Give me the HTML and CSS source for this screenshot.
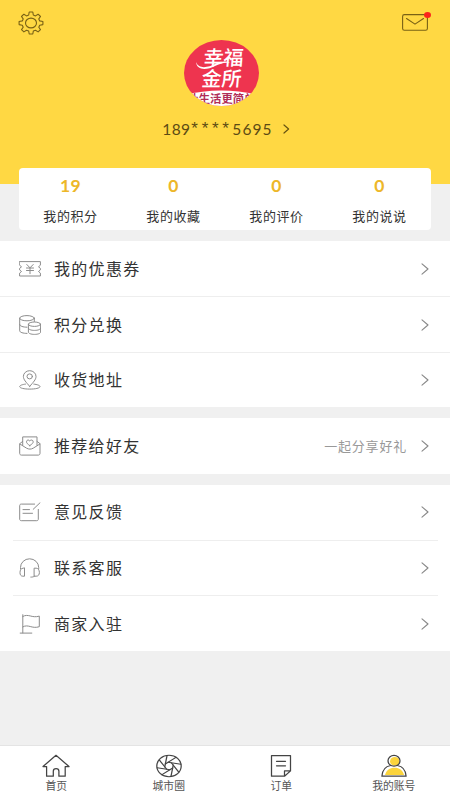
FILE: index.html
```html
<!DOCTYPE html>
<html lang="zh-CN">
<head>
<meta charset="utf-8">
<title>我的账号</title>
<link rel="stylesheet" href="styles.css">
</head>
<body>
<div class="app">
  <header class="hero">
    <div class="toolbar">
      <svg class="gear" width="26" height="24" viewBox="0 0 26 24"><path d="M11.2 1h3.6l.5 3 2.2.9 2.6-1.7 2.4 2.3-1.7 2.4.9 2 3.2.6v3.1l-3.2.6-.9 2 1.7 2.4-2.4 2.3-2.6-1.7-2.2.9-.5 2.900h-3.600l-.5-2.900-2.200-.9-2.600 1.700-2.400-2.300 1.700-2.400-.9-2-3.200-.6v-3.100l3.200-.6.9-2-1.700-2.400 2.400-2.300 2.600 1.700 2.200-.9z"/><ellipse cx="13" cy="12" rx="5.500" ry="4.900"/></svg>
      <span class="mail">
        <svg width="26" height="17" viewBox="0 0 26 17"><rect x=".6" y=".6" width="24.800" height="15.600" rx="1.800"/><path d="M4.500 4.500l8.500 5.600 8.500-5.600"/></svg>
        <i class="dot"></i>
      </span>
    </div>
    <div class="avatar">
      <div class="brand"><span>幸福</span><span>金所</span></div>
      <svg class="swoosh" width="75" height="66" viewBox="0 0 75 66"><path d="M12 22c3 8 13 5 19 2 6-3 11-3 15-1-6-1-10 1-15 3-8 4-18 5-19-4z" fill="#fff"/><path d="M0 55Q37 46 75 55V66H0z" fill="#fff"/></svg>
      <div class="slogan">让生活更简单</div>
    </div>
    <div class="phone"><span class="head">189</span><span class="mask">****</span><span class="tail">5695</span><svg width="7" height="10" viewBox="0 0 7 10"><path d="M1 1l4.600 4-4.600 4"/></svg></div>
  </header>

  <section class="stats">
    <div class="stat"><b>19</b><span>我的积分</span></div>
    <div class="stat"><b>0</b><span>我的收藏</span></div>
    <div class="stat"><b>0</b><span>我的评价</span></div>
    <div class="stat"><b>0</b><span>我的说说</span></div>
  </section>

  <section class="group">
    <div class="row">
      <svg class="icon" viewBox="0 0 22 20"><path d="M.6 2.600h20.800v3.600l-1.900 1.600 1.900 1.600v1.500l-1.900 1.600 1.900 1.600v2.900H.6v-2.900l1.900-1.600-1.900-1.600V9.400l1.900-1.600L.6 6.200z"/><path d="M7.800 5.500l3.200 3.300 3.200-3.300M11 8.800v5.900M7.500 9h7M7.500 11.500h7"/></svg>
      <span class="label">我的优惠券</span><svg class="arrow" viewBox="0 0 8 12"><path d="M1 .8L7 6 1 11.200"/></svg>
    </div>
    <div class="row">
      <svg class="icon" viewBox="0 0 22 20"><ellipse cx="8" cy="3.200" rx="7.300" ry="2.600"/><path d="M.7 3.200v12.600c0 1.500 3.300 2.600 7.300 2.600M.7 9.600c0 1.500 3.300 2.600 7.300 2.600M15.300 3.200v3.300"/><ellipse cx="15.500" cy="9.200" rx="6.100" ry="2.200"/><path d="M9.400 9.200v7.900c0 1.300 2.700 2.300 6.100 2.300s6.100-1 6.100-2.300V9.200M9.400 13.200c0 1.300 2.700 2.200 6.100 2.200s6.100-.9 6.100-2.200"/></svg>
      <span class="label">积分兑换</span><svg class="arrow" viewBox="0 0 8 12"><path d="M1 .8L7 6 1 11.200"/></svg>
    </div>
    <div class="row">
      <svg class="icon" viewBox="0 0 22 20"><path d="M10.700 16.400C7 12 4.400 9.700 4.400 6.400a6.300 5.700 0 0 1 12.600 0c0 3.300-2.600 5.600-6.300 10z"/><ellipse cx="10.700" cy="6.400" rx="2.700" ry="2.500"/><path d="M6.500 14.100C3.200 14.500.7 15.400.7 16.600c0 1.500 4.500 2.500 10 2.500s10.300-1 10.300-2.500c0-1.200-2.700-2.100-6.200-2.500"/></svg>
      <span class="label">收货地址</span><svg class="arrow" viewBox="0 0 8 12"><path d="M1 .8L7 6 1 11.200"/></svg>
    </div>
  </section>

  <section class="group">
    <div class="row">
      <svg class="icon" viewBox="0 0 22 20"><path d="M3.700 9.300V.9h14.300v8.400M3.700 5.400L.7 7.700v9.700c0 1 .7 1.700 1.700 1.700h16.900c1 0 1.700-.7 1.700-1.700V7.700l-3-2.300M.9 8l6.700 4.200c2.300 1.200 4.400 1.200 6.600 0L20.900 8"/><path d="M10.800 9.600C8.400 8 7.500 7 7.500 5.800c0-2 2.400-2.400 3.300-.8.900-1.600 3.400-1.200 3.400.8 0 1.200-1 2.200-3.400 3.800z"/></svg>
      <span class="label">推荐给好友</span><span class="note">一起分享好礼</span><svg class="arrow" viewBox="0 0 8 12"><path d="M1 .8L7 6 1 11.200"/></svg>
    </div>
  </section>

  <section class="group inset">
    <div class="row">
      <svg class="icon" viewBox="0 0 22 20"><path d="M15.600 2.100H2.300C1.200 2.100.7 2.700.7 3.500v13.700c0 .9.600 1.500 1.600 1.500h15.400c1 0 1.600-.6 1.600-1.500V7.400M21 .8l-6.800 6.500M4 7.600h6.500M4 11.300h9.500"/></svg>
      <span class="label">意见反馈</span><svg class="arrow" viewBox="0 0 8 12"><path d="M1 .8L7 6 1 11.200"/></svg>
    </div>
    <div class="row">
      <svg class="icon" viewBox="0 0 22 20"><path d="M1.500 11V9.500a9 8.600 0 0 1 18.200 0V11M5.500 10.200v8H3.800c-1.800 0-2.800-1.400-2.800-3.500 0-2.600 1-4.500 2.800-4.500zM15.500 10.200h1.700c1.900 0 3.200 1.900 3.200 4.300s-1.300 3.700-3.200 3.700h-1.700zM15.500 18.200c-1 .8-2.300.9-3.700.9"/></svg>
      <span class="label">联系客服</span><svg class="arrow" viewBox="0 0 8 12"><path d="M1 .8L7 6 1 11.200"/></svg>
    </div>
    <div class="row">
      <svg class="icon" viewBox="0 0 22 20"><path d="M3.800.7v18.200M1.200 19.100h11.600M3.800 2.500c5.500-3.400 9 2 16.500-.4v10.600c-7.500 2.500-11-3.100-16.500.2"/></svg>
      <span class="label">商家入驻</span><svg class="arrow" viewBox="0 0 8 12"><path d="M1 .8L7 6 1 11.200"/></svg>
    </div>
  </section>

  <nav class="tabs">
    <div class="tab"><svg viewBox="0 0 28 24"><path d="M1 12.500L14 1.300l13 11.200h-3.800v9.700h-6.300v-5c0-3.300-5.600-3.300-5.600 0v5H4.600v-9.700z"/></svg><span>首页</span></div>
    <div class="tab"><svg viewBox="0 0 28 24"><defs><path id="blade" d="M-1.700-4H11.300"/></defs><g transform="translate(14 12) scale(1 .88)"><circle r="12.200"/><use href="#blade" transform="rotate(10)"/><use href="#blade" transform="rotate(55)"/><use href="#blade" transform="rotate(100)"/><use href="#blade" transform="rotate(145)"/><use href="#blade" transform="rotate(190)"/><use href="#blade" transform="rotate(235)"/><use href="#blade" transform="rotate(280)"/><use href="#blade" transform="rotate(325)"/></g></svg><span>城市圈</span></div>
    <div class="tab"><svg viewBox="0 0 28 24"><path d="M4.500 1.500h19v15.400l-6 5.300h-13zM23.500 16.900h-6v5.300M9.500 7.300h9M9.500 11.800h9"/></svg><span>订单</span></div>
    <div class="tab on"><svg viewBox="0 0 28 24"><ellipse class="fill" cx="14.800" cy="7.200" rx="4.800" ry="4.300"/><path class="fill" d="M5 21c1.400-5 4.700-7.300 9.700-7.300 4.600 0 7.800 2.300 9.400 7.300z"/><ellipse cx="14" cy="6.800" rx="6" ry="5.400"/><path d="M1.900 22.200c.5-6.600 4.300-10 8.800-10.700M17.300 11.500c4.800.7 8.300 4.100 8.800 10.700H1.900"/></svg><span>我的账号</span></div>
  </nav>
</div>
</body>
</html>
```

FILE: styles.css
```css
* { box-sizing: border-box; }
body {
  margin: 0;
  background: #f0f0f0;
  color: #333;
  font-family: "Noto Sans CJK SC", sans-serif;
}
svg {
  display: block;
  flex: none;
  fill: none;
  stroke-linecap: round;
  stroke-linejoin: round;
}
.app {
  width: 450px;
  height: 800px;
  display: flex;
  flex-direction: column;
}

.hero {
  height: 184px;
  flex: none;
  background: #ffd843;
  display: flex;
  flex-direction: column;
  align-items: center;
}
.toolbar {
  width: 100%;
  height: 40px;
  padding: 11px 22px 0 18px;
  display: flex;
  justify-content: space-between;
  align-items: flex-start;
  stroke: #796115;
  stroke-width: 1.1;
}
.mail { position: relative; margin-top: 3px; }
.dot {
  position: absolute;
  top: -2px;
  right: -3px;
  width: 7px;
  height: 6px;
  border-radius: 50%;
  background: #fb241c;
}
.avatar {
  position: relative;
  width: 75px;
  height: 66px;
  margin-right: 8px;
  border-radius: 50%;
  overflow: hidden;
  background: #ee344f;
  color: #fff;
}
.brand {
  display: flex;
  flex-direction: column;
  padding: 6px 0 0 19px;
  font-size: 20px;
  font-weight: 500;
  line-height: 21px;
  transform: skewX(-5deg);
}
.swoosh { position: absolute; left: 0; top: 0; }
.slogan {
  position: absolute;
  left: 4px;
  top: 52px;
  width: 72px;
  white-space: nowrap;
  font-size: 11.3px;
  font-weight: 700;
  line-height: 13px;
  color: #b02d58;
}
.phone {
  height: 24px;
  margin-top: 11px;
  margin-left: 2px;
  display: flex;
  align-items: center;
  font-family: Lato, sans-serif;
  font-size: 15.5px;
  line-height: 24px;
  color: #5c4b14;
}
.head { width: 29px; letter-spacing: .4px; }
.mask {
  width: 41px;
  font-family: "Liberation Sans", sans-serif;
  font-size: 17px;
  letter-spacing: 3.7px;
}
.tail { letter-spacing: 1.1px; }
.phone svg { margin-left: 10px; stroke: #665312; stroke-width: 1.2; }

.stats {
  height: 62px;
  flex: none;
  margin: -16px 19px 11px;
  border-radius: 4px;
  background: #fff;
  display: grid;
  grid-template-columns: repeat(4, 1fr);
}
.stat { display: flex; flex-direction: column; align-items: center; }
.stat b {
  margin-top: 7px;
  font-family: Lato, sans-serif;
  font-size: 17.5px;
  line-height: 22px;
  letter-spacing: .3px;
  color: #edb729;
}
.stat span {
  margin-top: 10px;
  font-size: 13px;
  line-height: 18px;
  letter-spacing: .6px;
}

.group { flex: none; margin-bottom: 11px; background: #fff; }
.row {
  height: 55.4px;
  padding: 0 21px 0 19px;
  display: flex;
  align-items: center;
}
.row + .row { border-top: 1px solid #eee; }
.inset .row { margin: 0 12px 0 13px; padding: 0 9px 0 6px; }
.icon { width: 22px; height: 20px; stroke: #8c8c8c; stroke-width: 1; }
.label {
  margin: 0 0 2px 13px;
  font-size: 16px;
  line-height: 24px;
  letter-spacing: 1.3px;
}
.arrow { width: 8px; height: 12px; margin-left: auto; stroke: #888; stroke-width: 1.1; }
.note {
  margin: 0 0 1px auto;
  font-size: 13px;
  letter-spacing: .8px;
  color: #999;
}
.note + .arrow { margin-left: 14px; }

.tabs {
  height: 55px;
  flex: none;
  margin-top: auto;
  background: #fff;
  border-top: 1px solid #e4e4e4;
  display: grid;
  grid-template-columns: repeat(4, 1fr);
}
.tab {
  display: flex;
  flex-direction: column;
  align-items: center;
  font-size: 10.8px;
  line-height: 14px;
  color: #555;
}
.tab svg { width: 28px; height: 24px; margin: 8px 0 0; stroke: #444; stroke-width: 1.25; }
.tab .fill { fill: #fbd43c; stroke: none; }
```
